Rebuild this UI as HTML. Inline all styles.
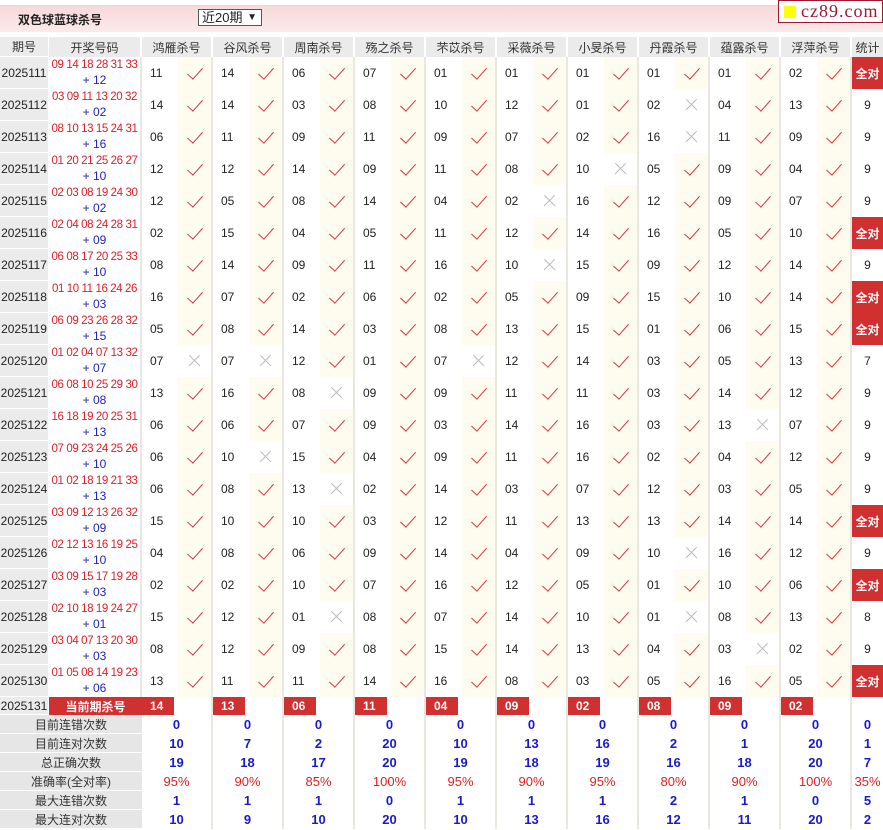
<!DOCTYPE html><html><head><meta charset="utf-8"><style>
*{margin:0;padding:0;box-sizing:border-box}
body{width:883px;height:830px;overflow:hidden;background:#fff;font-family:"Liberation Sans","Noto Sans CJK SC",sans-serif;font-size:12px;color:#222;position:relative}
.bar{position:absolute;left:0;top:5px;width:883px;height:27px;border-top:1px solid #ddd;background:linear-gradient(#f7d9d9,#fbeaea)}
.ttl{position:absolute;left:18px;top:11px;font-weight:bold;font-size:12px}
.sel{position:absolute;left:198px;top:9px;width:64px;height:17px;border:1px solid #555;background:#fff;font-size:13px;padding-left:3px;line-height:15px}
.sel b{position:absolute;right:4px;top:0;font-size:10px}
.logo{position:absolute;left:778px;top:0;width:105px;height:23px;border:1px solid #a01830;background:#fff;font-family:"Liberation Serif",serif;font-size:18px;color:#a01830;line-height:20px;padding-left:22px;letter-spacing:1px}
.logo i{position:absolute;left:5px;top:5px;width:12px;height:12px;background:#ff0}
table{position:absolute;left:0;top:37px;border-collapse:separate;border-spacing:0;table-layout:fixed;width:883px}
td{padding:0;white-space:nowrap;overflow:hidden}
tr.h td{height:20px;background:#ebebeb;text-align:center;color:#333}
tr.h td.g{border-right:2px solid #fff}
tr.d td{height:32px}
.q{width:49px;background:#ebebeb;border-bottom:1px solid #fff;border-right:1px solid #fff;text-align:center}
.k{width:93px;text-align:center;border-right:2px solid #e8e8e0;line-height:15px;font-size:11.5px;letter-spacing:-0.4px}
.r{color:#d8202c}.b{color:#2222bb;font-size:12px;letter-spacing:0}
.n{width:30px;padding-left:8px!important}
.c{width:41px;background:#fefcef;border-right:2px solid #e8e8e0;position:relative}
.y::after{content:"";position:absolute;left:13px;top:7px;width:7px;height:14px;border-right:1.7px solid #d9364a;border-bottom:1.7px solid #d9364a;transform:rotate(42deg)}
.x{background:#fff}
.x::before,.x::after{content:"";position:absolute;left:9px;top:15px;width:15px;height:1.3px;background:#bbb;transform:rotate(45deg)}
.x::after{transform:rotate(-45deg)}
.s{width:31px;text-align:center}
.a{background:#d03030;color:#fff;font-weight:bold}
tr.kr td{height:18px}
.kk{background:#d03030;color:#fff;font-weight:bold;text-align:center}
.kb{border-right:2px solid #e8e8e0}
.kb span{display:block;width:32px;height:18px;background:#d03030;color:#fff;font-weight:bold;padding-left:8px;line-height:18px}
tr.t td{height:19px;text-align:center;font-weight:bold;color:#1a1acc;font-size:13px}
tr.t td.l{background:#e6e6e6;color:#333;font-weight:normal;font-size:12px;border-bottom:1px solid #fff}
tr.t td.v{border-right:2px solid #e8e8e0}
tr.p td{color:#e02020;font-weight:normal}
</style></head><body>
<div class="bar"></div><div class="ttl">双色球蓝球杀号</div><div class="sel">近20期<b>▼</b></div>
<div class="logo"><i></i>cz89.com</div>
<table>
<colgroup><col style="width:49px"><col style="width:93px"><col span="20"><col style="width:31px"></colgroup>
<tr class="h"><td class="q">期号</td><td class="g" style="border-right:2px solid #fff">开奖号码</td><td colspan="2" class="g">鸿雁杀号</td><td colspan="2" class="g">谷风杀号</td><td colspan="2" class="g">周南杀号</td><td colspan="2" class="g">殇之杀号</td><td colspan="2" class="g">芣苡杀号</td><td colspan="2" class="g">采薇杀号</td><td colspan="2" class="g">小旻杀号</td><td colspan="2" class="g">丹霞杀号</td><td colspan="2" class="g">蕴露杀号</td><td colspan="2" class="g">浮萍杀号</td><td>统计</td></tr>
<tr class="d"><td class="q">2025111</td><td class="k"><span class="r">09 14 18 28 31 33</span><br><span class="b">+ 12</span></td><td class="n">11</td><td class="c y"></td><td class="n">14</td><td class="c y"></td><td class="n">06</td><td class="c y"></td><td class="n">07</td><td class="c y"></td><td class="n">01</td><td class="c y"></td><td class="n">01</td><td class="c y"></td><td class="n">01</td><td class="c y"></td><td class="n">01</td><td class="c y"></td><td class="n">01</td><td class="c y"></td><td class="n">02</td><td class="c y"></td><td class="s a">全对</td></tr>
<tr class="d"><td class="q">2025112</td><td class="k"><span class="r">03 09 11 13 20 32</span><br><span class="b">+ 02</span></td><td class="n">14</td><td class="c y"></td><td class="n">14</td><td class="c y"></td><td class="n">03</td><td class="c y"></td><td class="n">08</td><td class="c y"></td><td class="n">10</td><td class="c y"></td><td class="n">12</td><td class="c y"></td><td class="n">01</td><td class="c y"></td><td class="n">02</td><td class="c x"></td><td class="n">04</td><td class="c y"></td><td class="n">13</td><td class="c y"></td><td class="s">9</td></tr>
<tr class="d"><td class="q">2025113</td><td class="k"><span class="r">08 10 13 15 24 31</span><br><span class="b">+ 16</span></td><td class="n">06</td><td class="c y"></td><td class="n">11</td><td class="c y"></td><td class="n">09</td><td class="c y"></td><td class="n">11</td><td class="c y"></td><td class="n">09</td><td class="c y"></td><td class="n">07</td><td class="c y"></td><td class="n">02</td><td class="c y"></td><td class="n">16</td><td class="c x"></td><td class="n">11</td><td class="c y"></td><td class="n">09</td><td class="c y"></td><td class="s">9</td></tr>
<tr class="d"><td class="q">2025114</td><td class="k"><span class="r">01 20 21 25 26 27</span><br><span class="b">+ 10</span></td><td class="n">12</td><td class="c y"></td><td class="n">12</td><td class="c y"></td><td class="n">14</td><td class="c y"></td><td class="n">09</td><td class="c y"></td><td class="n">11</td><td class="c y"></td><td class="n">08</td><td class="c y"></td><td class="n">10</td><td class="c x"></td><td class="n">05</td><td class="c y"></td><td class="n">09</td><td class="c y"></td><td class="n">04</td><td class="c y"></td><td class="s">9</td></tr>
<tr class="d"><td class="q">2025115</td><td class="k"><span class="r">02 03 08 19 24 30</span><br><span class="b">+ 02</span></td><td class="n">12</td><td class="c y"></td><td class="n">05</td><td class="c y"></td><td class="n">08</td><td class="c y"></td><td class="n">14</td><td class="c y"></td><td class="n">04</td><td class="c y"></td><td class="n">02</td><td class="c x"></td><td class="n">16</td><td class="c y"></td><td class="n">12</td><td class="c y"></td><td class="n">09</td><td class="c y"></td><td class="n">07</td><td class="c y"></td><td class="s">9</td></tr>
<tr class="d"><td class="q">2025116</td><td class="k"><span class="r">02 04 08 24 28 31</span><br><span class="b">+ 09</span></td><td class="n">02</td><td class="c y"></td><td class="n">15</td><td class="c y"></td><td class="n">04</td><td class="c y"></td><td class="n">05</td><td class="c y"></td><td class="n">11</td><td class="c y"></td><td class="n">12</td><td class="c y"></td><td class="n">14</td><td class="c y"></td><td class="n">16</td><td class="c y"></td><td class="n">05</td><td class="c y"></td><td class="n">10</td><td class="c y"></td><td class="s a">全对</td></tr>
<tr class="d"><td class="q">2025117</td><td class="k"><span class="r">06 08 17 20 25 33</span><br><span class="b">+ 10</span></td><td class="n">08</td><td class="c y"></td><td class="n">14</td><td class="c y"></td><td class="n">09</td><td class="c y"></td><td class="n">11</td><td class="c y"></td><td class="n">16</td><td class="c y"></td><td class="n">10</td><td class="c x"></td><td class="n">15</td><td class="c y"></td><td class="n">09</td><td class="c y"></td><td class="n">12</td><td class="c y"></td><td class="n">14</td><td class="c y"></td><td class="s">9</td></tr>
<tr class="d"><td class="q">2025118</td><td class="k"><span class="r">01 10 11 16 24 26</span><br><span class="b">+ 03</span></td><td class="n">16</td><td class="c y"></td><td class="n">07</td><td class="c y"></td><td class="n">02</td><td class="c y"></td><td class="n">06</td><td class="c y"></td><td class="n">02</td><td class="c y"></td><td class="n">05</td><td class="c y"></td><td class="n">09</td><td class="c y"></td><td class="n">15</td><td class="c y"></td><td class="n">10</td><td class="c y"></td><td class="n">14</td><td class="c y"></td><td class="s a">全对</td></tr>
<tr class="d"><td class="q">2025119</td><td class="k"><span class="r">06 09 23 26 28 32</span><br><span class="b">+ 15</span></td><td class="n">05</td><td class="c y"></td><td class="n">08</td><td class="c y"></td><td class="n">14</td><td class="c y"></td><td class="n">03</td><td class="c y"></td><td class="n">08</td><td class="c y"></td><td class="n">13</td><td class="c y"></td><td class="n">15</td><td class="c y"></td><td class="n">01</td><td class="c y"></td><td class="n">06</td><td class="c y"></td><td class="n">15</td><td class="c y"></td><td class="s a">全对</td></tr>
<tr class="d"><td class="q">2025120</td><td class="k"><span class="r">01 02 04 07 13 32</span><br><span class="b">+ 07</span></td><td class="n">07</td><td class="c x"></td><td class="n">07</td><td class="c x"></td><td class="n">12</td><td class="c y"></td><td class="n">01</td><td class="c y"></td><td class="n">07</td><td class="c x"></td><td class="n">12</td><td class="c y"></td><td class="n">14</td><td class="c y"></td><td class="n">03</td><td class="c y"></td><td class="n">05</td><td class="c y"></td><td class="n">13</td><td class="c y"></td><td class="s">7</td></tr>
<tr class="d"><td class="q">2025121</td><td class="k"><span class="r">06 08 10 25 29 30</span><br><span class="b">+ 08</span></td><td class="n">13</td><td class="c y"></td><td class="n">16</td><td class="c y"></td><td class="n">08</td><td class="c x"></td><td class="n">09</td><td class="c y"></td><td class="n">09</td><td class="c y"></td><td class="n">11</td><td class="c y"></td><td class="n">11</td><td class="c y"></td><td class="n">03</td><td class="c y"></td><td class="n">14</td><td class="c y"></td><td class="n">12</td><td class="c y"></td><td class="s">9</td></tr>
<tr class="d"><td class="q">2025122</td><td class="k"><span class="r">16 18 19 20 25 31</span><br><span class="b">+ 13</span></td><td class="n">06</td><td class="c y"></td><td class="n">06</td><td class="c y"></td><td class="n">07</td><td class="c y"></td><td class="n">09</td><td class="c y"></td><td class="n">03</td><td class="c y"></td><td class="n">14</td><td class="c y"></td><td class="n">16</td><td class="c y"></td><td class="n">03</td><td class="c y"></td><td class="n">13</td><td class="c x"></td><td class="n">07</td><td class="c y"></td><td class="s">9</td></tr>
<tr class="d"><td class="q">2025123</td><td class="k"><span class="r">07 09 23 24 25 26</span><br><span class="b">+ 10</span></td><td class="n">06</td><td class="c y"></td><td class="n">10</td><td class="c x"></td><td class="n">15</td><td class="c y"></td><td class="n">04</td><td class="c y"></td><td class="n">09</td><td class="c y"></td><td class="n">11</td><td class="c y"></td><td class="n">16</td><td class="c y"></td><td class="n">02</td><td class="c y"></td><td class="n">04</td><td class="c y"></td><td class="n">12</td><td class="c y"></td><td class="s">9</td></tr>
<tr class="d"><td class="q">2025124</td><td class="k"><span class="r">01 02 18 19 21 33</span><br><span class="b">+ 13</span></td><td class="n">06</td><td class="c y"></td><td class="n">08</td><td class="c y"></td><td class="n">13</td><td class="c x"></td><td class="n">02</td><td class="c y"></td><td class="n">14</td><td class="c y"></td><td class="n">03</td><td class="c y"></td><td class="n">07</td><td class="c y"></td><td class="n">12</td><td class="c y"></td><td class="n">03</td><td class="c y"></td><td class="n">05</td><td class="c y"></td><td class="s">9</td></tr>
<tr class="d"><td class="q">2025125</td><td class="k"><span class="r">03 09 12 13 26 32</span><br><span class="b">+ 09</span></td><td class="n">15</td><td class="c y"></td><td class="n">10</td><td class="c y"></td><td class="n">10</td><td class="c y"></td><td class="n">03</td><td class="c y"></td><td class="n">12</td><td class="c y"></td><td class="n">11</td><td class="c y"></td><td class="n">13</td><td class="c y"></td><td class="n">13</td><td class="c y"></td><td class="n">14</td><td class="c y"></td><td class="n">14</td><td class="c y"></td><td class="s a">全对</td></tr>
<tr class="d"><td class="q">2025126</td><td class="k"><span class="r">02 12 13 16 19 25</span><br><span class="b">+ 10</span></td><td class="n">04</td><td class="c y"></td><td class="n">08</td><td class="c y"></td><td class="n">06</td><td class="c y"></td><td class="n">09</td><td class="c y"></td><td class="n">14</td><td class="c y"></td><td class="n">04</td><td class="c y"></td><td class="n">09</td><td class="c y"></td><td class="n">10</td><td class="c x"></td><td class="n">16</td><td class="c y"></td><td class="n">12</td><td class="c y"></td><td class="s">9</td></tr>
<tr class="d"><td class="q">2025127</td><td class="k"><span class="r">03 09 15 17 19 28</span><br><span class="b">+ 03</span></td><td class="n">02</td><td class="c y"></td><td class="n">02</td><td class="c y"></td><td class="n">10</td><td class="c y"></td><td class="n">07</td><td class="c y"></td><td class="n">16</td><td class="c y"></td><td class="n">12</td><td class="c y"></td><td class="n">05</td><td class="c y"></td><td class="n">01</td><td class="c y"></td><td class="n">10</td><td class="c y"></td><td class="n">06</td><td class="c y"></td><td class="s a">全对</td></tr>
<tr class="d"><td class="q">2025128</td><td class="k"><span class="r">02 10 18 19 24 27</span><br><span class="b">+ 01</span></td><td class="n">15</td><td class="c y"></td><td class="n">12</td><td class="c y"></td><td class="n">01</td><td class="c x"></td><td class="n">08</td><td class="c y"></td><td class="n">07</td><td class="c y"></td><td class="n">14</td><td class="c y"></td><td class="n">10</td><td class="c y"></td><td class="n">01</td><td class="c x"></td><td class="n">08</td><td class="c y"></td><td class="n">13</td><td class="c y"></td><td class="s">8</td></tr>
<tr class="d"><td class="q">2025129</td><td class="k"><span class="r">03 04 07 13 20 30</span><br><span class="b">+ 03</span></td><td class="n">08</td><td class="c y"></td><td class="n">12</td><td class="c y"></td><td class="n">09</td><td class="c y"></td><td class="n">08</td><td class="c y"></td><td class="n">15</td><td class="c y"></td><td class="n">14</td><td class="c y"></td><td class="n">13</td><td class="c y"></td><td class="n">04</td><td class="c y"></td><td class="n">03</td><td class="c x"></td><td class="n">02</td><td class="c y"></td><td class="s">9</td></tr>
<tr class="d"><td class="q">2025130</td><td class="k"><span class="r">01 05 08 14 19 23</span><br><span class="b">+ 06</span></td><td class="n">13</td><td class="c y"></td><td class="n">11</td><td class="c y"></td><td class="n">11</td><td class="c y"></td><td class="n">14</td><td class="c y"></td><td class="n">16</td><td class="c y"></td><td class="n">08</td><td class="c y"></td><td class="n">03</td><td class="c y"></td><td class="n">05</td><td class="c y"></td><td class="n">16</td><td class="c y"></td><td class="n">05</td><td class="c y"></td><td class="s a">全对</td></tr>
<tr class="kr"><td class="q">2025131</td><td class="kk">当前期杀号</td><td colspan="2" class="kb"><span>14</span></td><td colspan="2" class="kb"><span>13</span></td><td colspan="2" class="kb"><span>06</span></td><td colspan="2" class="kb"><span>11</span></td><td colspan="2" class="kb"><span>04</span></td><td colspan="2" class="kb"><span>09</span></td><td colspan="2" class="kb"><span>02</span></td><td colspan="2" class="kb"><span>08</span></td><td colspan="2" class="kb"><span>09</span></td><td colspan="2" class="kb"><span>02</span></td><td></td></tr>
<tr class="t"><td colspan="2" class="l">目前连错次数</td><td colspan="2" class="v">0</td><td colspan="2" class="v">0</td><td colspan="2" class="v">0</td><td colspan="2" class="v">0</td><td colspan="2" class="v">0</td><td colspan="2" class="v">0</td><td colspan="2" class="v">0</td><td colspan="2" class="v">0</td><td colspan="2" class="v">0</td><td colspan="2" class="v">0</td><td>0</td></tr>
<tr class="t"><td colspan="2" class="l">目前连对次数</td><td colspan="2" class="v">10</td><td colspan="2" class="v">7</td><td colspan="2" class="v">2</td><td colspan="2" class="v">20</td><td colspan="2" class="v">10</td><td colspan="2" class="v">13</td><td colspan="2" class="v">16</td><td colspan="2" class="v">2</td><td colspan="2" class="v">1</td><td colspan="2" class="v">20</td><td>1</td></tr>
<tr class="t"><td colspan="2" class="l">总正确次数</td><td colspan="2" class="v">19</td><td colspan="2" class="v">18</td><td colspan="2" class="v">17</td><td colspan="2" class="v">20</td><td colspan="2" class="v">19</td><td colspan="2" class="v">18</td><td colspan="2" class="v">19</td><td colspan="2" class="v">16</td><td colspan="2" class="v">18</td><td colspan="2" class="v">20</td><td>7</td></tr>
<tr class="t p"><td colspan="2" class="l">准确率(全对率)</td><td colspan="2" class="v">95%</td><td colspan="2" class="v">90%</td><td colspan="2" class="v">85%</td><td colspan="2" class="v">100%</td><td colspan="2" class="v">95%</td><td colspan="2" class="v">90%</td><td colspan="2" class="v">95%</td><td colspan="2" class="v">80%</td><td colspan="2" class="v">90%</td><td colspan="2" class="v">100%</td><td>35%</td></tr>
<tr class="t"><td colspan="2" class="l">最大连错次数</td><td colspan="2" class="v">1</td><td colspan="2" class="v">1</td><td colspan="2" class="v">1</td><td colspan="2" class="v">0</td><td colspan="2" class="v">1</td><td colspan="2" class="v">1</td><td colspan="2" class="v">1</td><td colspan="2" class="v">2</td><td colspan="2" class="v">1</td><td colspan="2" class="v">0</td><td>5</td></tr>
<tr class="t"><td colspan="2" class="l">最大连对次数</td><td colspan="2" class="v">10</td><td colspan="2" class="v">9</td><td colspan="2" class="v">10</td><td colspan="2" class="v">20</td><td colspan="2" class="v">10</td><td colspan="2" class="v">13</td><td colspan="2" class="v">16</td><td colspan="2" class="v">12</td><td colspan="2" class="v">11</td><td colspan="2" class="v">20</td><td>2</td></tr>
</table>
</body></html>
